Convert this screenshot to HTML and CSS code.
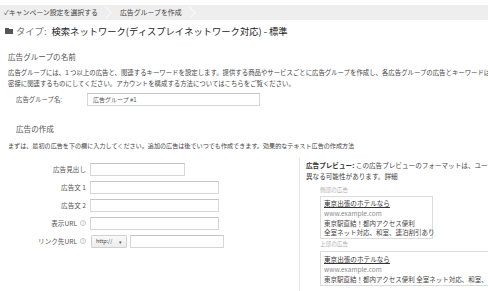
FILE: index.html
```html
<!DOCTYPE html>
<html lang="ja">
<head>
<meta charset="utf-8">
<title>広告グループを作成</title>
<link rel="stylesheet" href="styles.css">
</head>
<body>
<div class="page">
  <nav class="crumbs">
    <span class="crumb first">✓キャンペーン設定を選択する</span><span class="chev"></span>
    <span class="crumb">広告グループを作成</span><span class="chev"></span>
  </nav>

  <h1 class="title"><span class="folder"></span><span class="type">タイプ:</span><span class="net">検索ネットワーク(ディスプレイネットワーク対応) - 標準</span></h1>

  <h2 class="sec sec-name">広告グループの名前</h2>
  <p class="desc">
    <span class="line">広告グループには、1 つ以上の広告と、関連するキーワードを設定します。提供する商品やサービスごとに広告グループを作成し、各広告グループの広告とキーワードは、</span>
    <span class="line">密接に関連するものにしてください。アカウントを構成する方法については<span class="lnk">こちら</span>をご覧ください。</span>
  </p>
  <div class="name-row">
    <span class="name-label">広告グループ名:</span>
    <div class="field name-field">広告グループ #1</div>
  </div>

  <h2 class="sec sec-ad">広告の作成</h2>
  <p class="desc2">まずは、最初の広告を下の欄に入力してください。追加の広告は後でいつでも作成できます。<span class="lnk">効果的なテキスト広告の作成方法</span></p>

  <div class="ad-area">
    <div class="form">
      <span class="flabel">広告見出し</span><div class="field f-head"></div>
      <span class="flabel">広告文 1</span><div class="field f-wide"></div>
      <span class="flabel">広告文 2</span><div class="field f-wide"></div>
      <span class="flabel">表示URL <span class="help">?</span></span><div class="field f-wide"></div>
      <span class="flabel">リンク先URL <span class="help">?</span></span>
      <div class="url-row"><div class="select">http:// <span class="arrow">▾</span></div><div class="field f-url"></div></div>
    </div>

    <aside class="preview">
      <div class="pv-head"><b>広告プレビュー:</b> この広告プレビューのフォーマットは、ユーザー</div>
      <div class="pv-head">異なる可能性があります。<span class="lnk">詳細</span></div>
      <div class="pv-label">側部の広告</div>
      <div class="ad-box side">
        <div class="ad-title">東京出張のホテルなら</div>
        <div class="ad-url">www.example.com</div>
        <div class="ad-text">東京駅直結！都内アクセス便利</div>
        <div class="ad-text">全室ネット対応、和室、連泊割引あり</div>
      </div>
      <div class="pv-label">上部の広告</div>
      <div class="ad-box top">
        <div class="ad-title">東京出張のホテルなら</div>
        <div class="ad-url">www.example.com</div>
        <div class="ad-text">東京駅直結！都内アクセス便利 全室ネット対応、和室、</div>
      </div>
    </aside>
  </div>
</div>
</body>
</html>
```

FILE: styles.css
```css
* { box-sizing: border-box; }

html, body {
  margin: 0;
  padding: 0;
  background: #fff;
}

body {
  width: 488px;
  height: 291px;
  overflow: hidden;
  font-family: "Noto Sans CJK JP", "Noto Sans", sans-serif;
  color: #444;
}

.page {
  width: 488px;
}

/* breadcrumb */
.crumbs {
  margin-top: 5px;
  height: 15px;
  background: #eeeeee;
  display: flex;
  align-items: center;
  font-size: 6.9px;
  line-height: 15px;
  color: #444;
  white-space: nowrap;
}

.crumb.first { padding-left: 4px; }

.chev {
  display: inline-block;
  width: 9px;
  height: 9px;
  border-top: 1px solid #fafafa;
  border-right: 1px solid #fafafa;
  transform: rotate(45deg);
  margin: 0 10px 0 3px;
}

/* title */
.title {
  margin: 5px 0 0 0;
  padding-left: 5px;
  height: 12px;
  display: flex;
  align-items: center;
  font-size: 9.3px;
  line-height: 12px;
  font-weight: normal;
  white-space: nowrap;
  color: #222;
}

.folder {
  position: relative;
  display: inline-block;
  width: 8px;
  height: 5px;
  background: #555;
  margin-right: 3px;
  margin-top: 1px;
}

.folder::before {
  content: "";
  position: absolute;
  left: 0;
  top: -1px;
  width: 4px;
  height: 1px;
  background: #555;
}

.type {
  color: #777;
  margin-right: 5px;
}

/* section headings */
.sec {
  margin: 0;
  padding-left: 8px;
  font-size: 7.6px;
  line-height: 10px;
  font-weight: normal;
  color: #555;
  white-space: nowrap;
}

.sec-name { margin-top: 15px; }
.sec-ad { margin-top: 18px; padding-left: 16px; }

.desc {
  margin: 4.5px 0 0 0;
  padding-left: 8px;
  font-size: 6.4px;
  line-height: 11px;
  color: #444;
  white-space: nowrap;
}

.desc .line { display: block; }

.lnk { color: #444; }

.name-row {
  margin-top: 4px;
  padding-left: 16px;
  display: flex;
  align-items: center;
  height: 13px;
}

.name-label {
  width: 71px;
  font-size: 6.4px;
  color: #555;
}

.field {
  height: 13px;
  border: 1px solid #d6d6d6;
  border-top-color: #c4c4c4;
  background: #fff;
}

.name-field {
  width: 173px;
  padding-left: 5px;
  font-size: 6px;
  line-height: 11px;
  color: #555;
}

.desc2 {
  margin: 6.5px 0 0 0;
  padding-left: 8px;
  font-size: 6.1px;
  line-height: 11px;
  color: #444;
  white-space: nowrap;
}

/* ad creation area */
.ad-area {
  margin-top: 7px;
  display: flex;
  align-items: flex-start;
}

.form {
  width: 299px;
  flex: none;
  padding-top: 4.5px;
  display: grid;
  grid-template-columns: 86px auto;
  grid-auto-rows: 13px;
  column-gap: 4px;
  row-gap: 5px;
  justify-items: start;
  align-items: center;
}

.flabel {
  justify-self: end;
  font-size: 6.6px;
  line-height: 13px;
  color: #555;
  white-space: nowrap;
  display: flex;
  align-items: center;
}

.help {
  display: inline-flex;
  align-items: center;
  justify-content: center;
  width: 6px;
  height: 6px;
  margin-left: 3px;
  border: 1px solid #c8c8c8;
  border-radius: 50%;
  font-size: 4.5px;
  line-height: 1;
  color: #aaa;
}

.f-head { width: 95px; }
.f-wide { width: 129px; }

.url-row {
  display: flex;
  align-items: center;
  gap: 3px;
  padding-left: 1px;
}

.select {
  width: 36px;
  height: 13px;
  border: 1px solid #d0d0d0;
  border-radius: 1px;
  background: linear-gradient(#fafafa, #ececec);
  font-size: 5.4px;
  line-height: 11px;
  color: #444;
  padding-left: 4px;
  display: flex;
  justify-content: space-between;
  padding-right: 4px;
}

.arrow { font-size: 5px; color: #555; }

.f-url { width: 94px; }

/* preview */
.preview {
  flex: 1;
  min-width: 0;
  border-left: 1px solid #e4e4e4;
  padding: 2px 0 10px 6px;
  font-size: 6.6px;
  line-height: 11px;
  color: #444;
  white-space: nowrap;
  overflow: hidden;
}

.pv-head b { color: #333; }

.pv-label {
  margin-left: 14px;
  font-size: 5.6px;
  line-height: 10px;
  color: #b0b0b0;
}

.pv-head + .pv-head + .pv-label { margin-top: 2.5px; }

.ad-box {
  margin-left: 14px;
  border: 1px solid #dcdcdc;
  padding: 1px 0 1px 3px;
  font-size: 6.5px;
}

.ad-box.side { width: 113px; margin-top: 1px; }
.ad-box.top { width: 220px; margin-top: 2px; padding-top: 2px; }

.ad-title {
  line-height: 10px;
  color: #333;
  text-decoration: underline;
  font-size: 6.6px;
}

.ad-url {
  line-height: 11px;
  color: #8a8a8a;
}

.ad-text {
  line-height: 9px;
  color: #444;
}
```
